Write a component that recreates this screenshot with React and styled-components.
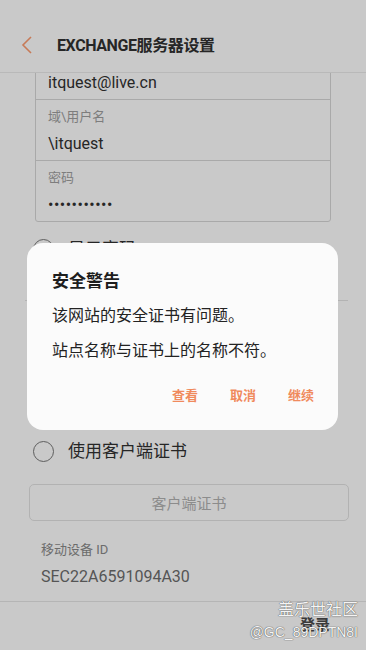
import React from "react";
import styled, { createGlobalStyle } from "styled-components";

const Global = createGlobalStyle`
  html, body { margin: 0; padding: 0; }
  body { font-family: Roboto, "Noto Sans CJK SC", sans-serif; background: #c9c9c9; }
  * { box-sizing: border-box; }
`;

const Screen = styled.div`
  position: relative;
  width: 366px;
  height: 650px;
  overflow: hidden;
  background: #c9c9c9;
  display: flex;
  flex-direction: column;
  color: #2a2a2a;
`;

const Header = styled.header`
  height: 73px;
  flex: none;
  display: flex;
  align-items: flex-end;
  padding: 0 0 14px 20px;
  border-bottom: 1px solid #b9b9b9;
`;

const Back = styled.svg`
  width: 16px;
  height: 20px;
  margin-right: 21px;
  margin-bottom: 3px;
`;

const Title = styled.h1`
  margin: 0;
  font-family: Roboto, "Noto Sans CJK SC", sans-serif;
  font-size: 16px;
  font-weight: 700;
  letter-spacing: -0.4px;
  line-height: 24px;
  color: #262626;
`;

const Content = styled.main`
  flex: 1;
  overflow: hidden;
  display: flex;
  flex-direction: column;
`;

const Scroll = styled.div`
  margin-top: -35px;
  display: flex;
  flex-direction: column;
`;

const FormBox = styled.div`
  margin: 0 35px;
  border: 1px solid #a9a9a9;
  border-radius: 3px;
  display: flex;
  flex-direction: column;
`;

const Field = styled.div`
  height: ${(p) => (p.$first ? 60 : 61)}px;
  padding: ${(p) => (p.$first ? "34px" : "8px")} 12px 0;
  border-top: ${(p) => (p.$first ? "none" : "1px solid #a9a9a9")};
  display: flex;
  flex-direction: column;
  gap: 8px;
`;

const Label = styled.div`
  font-size: 13px;
  line-height: 18px;
  color: #7d7d7d;
`;

const Value = styled.div`
  font-size: 16px;
  line-height: 20px;
  color: #262626;
  letter-spacing: ${(p) => (p.$dots ? "0.5px" : "0")};
`;

const RadioRow = styled.div`
  display: flex;
  align-items: center;
  gap: 14px;
  margin: ${(p) => p.$m};
  padding-left: 33px;
`;

const Circle = styled.span`
  width: 21px;
  height: 21px;
  border-radius: 50%;
  border: 1.5px solid #5e5e5e;
  flex: none;
`;

const RadioText = styled.span`
  font-size: 17px;
  line-height: 21px;
  color: #262626;
`;

const Divider = styled.div`
  height: 1px;
  margin: 40px 18px 0 25px;
  background: #b3b3b3;
`;

const Hidden = styled.div`
  height: 140px;
`;

const OutlineButton = styled.div`
  margin: 22px 17px 0 29px;
  height: 37px;
  border: 1px solid #b2b2b2;
  border-radius: 5px;
  display: flex;
  align-items: center;
  justify-content: center;
  font-size: 15px;
  color: #8c8c8c;
`;

const InfoLabel = styled.div`
  margin: 20px 0 0 41px;
  font-size: 13px;
  line-height: 18px;
  color: #6c6c6c;
`;

const InfoValue = styled.div`
  margin: 8px 0 0 41px;
  font-size: 16px;
  line-height: 20px;
  color: #555;
`;

const Footer = styled.footer`
  height: 49px;
  flex: none;
  border-top: 1px solid #b5b5b5;
  display: flex;
  align-items: center;
  justify-content: flex-end;
  padding: 0 36px 6px 0;
`;

const FooterBtn = styled.span`
  font-size: 15px;
  font-weight: 700;
  color: #3a3a3a;
`;

const Dialog = styled.div`
  position: absolute;
  left: 27px;
  top: 243px;
  width: 311px;
  height: 187px;
  border-radius: 16px;
  background: #fbfbfb;
  padding: 26px 24px 0 25px;
  display: flex;
  flex-direction: column;
`;

const DialogTitle = styled.div`
  font-size: 17px;
  font-weight: 700;
  line-height: 24px;
  color: #1e1e1e;
`;

const DialogText = styled.div`
  margin-top: ${(p) => p.$mt}px;
  font-size: 16px;
  line-height: 22px;
  color: #232323;
`;

const Actions = styled.div`
  margin-top: 24px;
  display: flex;
  justify-content: flex-end;
  gap: 32px;
`;

const Action = styled.span`
  font-size: 13px;
  font-weight: 700;
  line-height: 20px;
  color: #f08a5d;
`;

const Watermark = styled.div`
  position: absolute;
  right: 8px;
  bottom: 8px;
  display: flex;
  flex-direction: column;
  align-items: flex-end;
  gap: 2px;
  color: #f4f4f4;
  text-shadow: 0 0 1px #555, 0 0 1px #555;
  pointer-events: none;
`;

const WmTitle = styled.span`
  font-size: 16px;
  line-height: 20px;
`;

const WmId = styled.span`
  font-size: 14px;
  line-height: 20px;
  font-family: "Liberation Sans", Arial, sans-serif;
`;

export default function App() {
  return (
    <>
      <Global />
      <Screen>
        <Header>
          <Back viewBox="0 0 16 20">
            <path d="M11 2 L3 10 L11 18" fill="none" stroke="#c77a57" strokeWidth="1.6" />
          </Back>
          <Title>EXCHANGE服务器设置</Title>
        </Header>
        <Content>
          <Scroll>
            <FormBox>
              <Field $first>
                <Value>itquest@live.cn</Value>
              </Field>
              <Field>
                <Label>域\用户名</Label>
                <Value>\itquest</Value>
              </Field>
              <Field>
                <Label>密码</Label>
                <Value $dots>•••••••••••</Value>
              </Field>
            </FormBox>
            <RadioRow $m="17px 0 0">
              <Circle />
              <RadioText>显示密码</RadioText>
            </RadioRow>
            <Divider />
            <Hidden />
            <RadioRow $m="0">
              <Circle />
              <RadioText>使用客户端证书</RadioText>
            </RadioRow>
            <OutlineButton>客户端证书</OutlineButton>
            <InfoLabel>移动设备 ID</InfoLabel>
            <InfoValue>SEC22A6591094A30</InfoValue>
          </Scroll>
        </Content>
        <Footer>
          <FooterBtn>登录</FooterBtn>
        </Footer>
        <Dialog>
          <DialogTitle>安全警告</DialogTitle>
          <DialogText $mt={12}>该网站的安全证书有问题。</DialogText>
          <DialogText $mt={13}>站点名称与证书上的名称不符。</DialogText>
          <Actions>
            <Action>查看</Action>
            <Action>取消</Action>
            <Action>继续</Action>
          </Actions>
        </Dialog>
        <Watermark>
          <WmTitle>盖乐世社区</WmTitle>
          <WmId>@GC_89DPTN8I</WmId>
        </Watermark>
      </Screen>
    </>
  );
}
